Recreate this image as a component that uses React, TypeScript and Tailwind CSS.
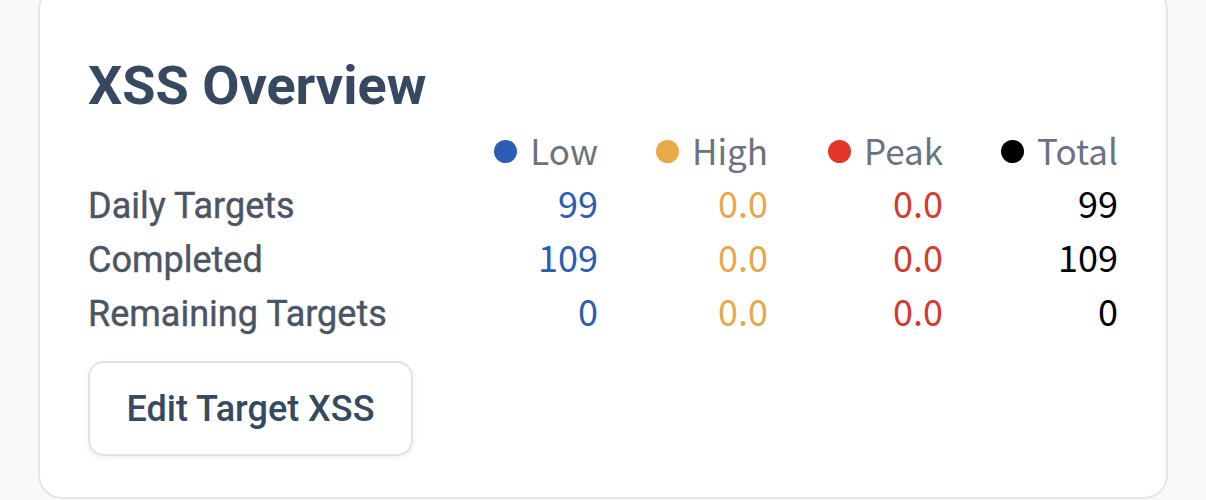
import React from 'react';

type Series = { key: string; label: string; dot: string; text: string };

const SERIES: Series[] = [
    { key: 'low', label: 'Low', dot: 'bg-[#2b5db5]', text: 'text-[#2b5db5]' },
    { key: 'high', label: 'High', dot: 'bg-[#e9a947]', text: 'text-[#e6a84c]' },
    { key: 'peak', label: 'Peak', dot: 'bg-[#e5352a]', text: 'text-[#d8382d]' },
    { key: 'total', label: 'Total', dot: 'bg-black', text: 'text-black' },
];

const ROWS: { label: string; values: string[] }[] = [
    { label: 'Daily Targets', values: ['99', '0.0', '0.0', '99'] },
    { label: 'Completed', values: ['109', '0.0', '0.0', '109'] },
    { label: 'Remaining Targets', values: ['0', '0.0', '0.0', '0'] },
];

const numFont = "font-['Noto_Sans_CJK_SC','Noto_Sans',sans-serif]";

const App: React.FC = () => {
    return (
        <div className="min-h-[500px] h-[500px] overflow-hidden bg-[#f8f9fa] px-[38px] font-['Roboto',sans-serif]">
            <div className="-mt-[14px] h-[513px] rounded-[24px] border-2 border-[#e4e7ea] bg-white px-[48px] pt-[68px]">
                <h1 className="text-[54px] leading-[60px] font-bold text-[#374960]">XSS Overview</h1>

                <div className="mt-[7px] grid grid-cols-[1fr_173px_170px_175px_175px] items-baseline">
                    <div />
                    {SERIES.map(s => (
                        <div key={s.key} className={`flex items-center justify-end gap-[13px] text-[35px] leading-[53px] text-[#6b7280] ${numFont}`}>
                            <span className={`mt-[3px] inline-block h-[23px] w-[23px] rounded-full ${s.dot}`} />
                            <span>{s.label}</span>
                        </div>
                    ))}

                    {ROWS.map(row => (
                        <React.Fragment key={row.label}>
                            <div className="text-[36px] leading-[48px] text-[#4b5563] [-webkit-text-stroke:0.4px_#4b5563]">{row.label}</div>
                            {row.values.map((v, i) => (
                                <div key={i} className={`text-right text-[36px] leading-[53px] ${numFont} ${SERIES[i].text}`}>
                                    {v}
                                </div>
                            ))}
                        </React.Fragment>
                    ))}
                </div>

                <button className="mt-[23px] h-[95px] w-[325px] rounded-[16px] border-2 border-[#dde4e7] bg-white text-[36px] font-medium text-[#374960] shadow-[0_2px_6px_rgba(0,0,0,0.06)]">
                    Edit Target XSS
                </button>
            </div>
        </div>
    );
};

export default App;
